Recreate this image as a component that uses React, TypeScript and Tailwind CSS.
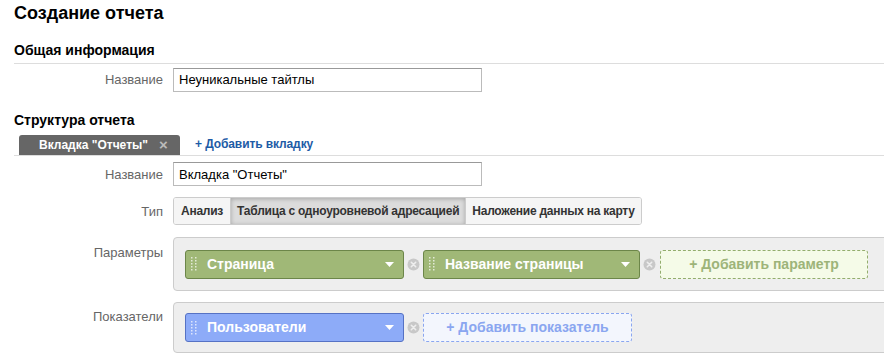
import React from "react";

function Grip() {
  return (
    <svg width="6" height="14" viewBox="0 0 6 14" className="shrink-0">
      {[1, 4, 7, 10, 13].map((y) =>
        [1, 5].map((x) => <rect key={`${x}-${y}`} x={x - 1} y={y - 1} width="1.5" height="1.5" fill="rgba(255,255,255,0.7)" />)
      )}
    </svg>
  );
}

function RemoveDot() {
  return (
    <svg width="13" height="13" viewBox="0 0 13 13" className="mx-[3px] shrink-0">
      <circle cx="6.5" cy="6.5" r="6" fill="#c8c8c8" />
      <path d="M4.3 4.3l4.4 4.4M8.7 4.3l-4.4 4.4" stroke="#eee" strokeWidth="1.6" strokeLinecap="round" />
    </svg>
  );
}

function Pill({ label, tone, width }: { label: string; tone: "green" | "blue"; width: string }) {
  const cls =
    tone === "green"
      ? "bg-[#a0b877] border-[#6c8649]"
      : "bg-[#8dabf8] border-[#5672c4]";
  return (
    <div className={`flex h-[29px] items-center rounded-[3px] border pl-[5px] pr-[9px] text-white ${cls} ${width}`}>
      <Grip />
      <span className="ml-[10px] flex-1 text-[14px] font-bold">{label}</span>
      <svg width="9" height="5" viewBox="0 0 9 5">
        <path d="M0 0h9L4.5 5z" fill="#fff" />
      </svg>
    </div>
  );
}

function Row({ label, children, labelTop }: { label: string; children: React.ReactNode; labelTop?: string }) {
  return (
    <div className="flex">
      <div className={`w-[164px] shrink-0 pr-[1px] text-right text-[13px] text-[#666] ${labelTop ?? ""}`}>{label}</div>
      <div className="ml-[9px] min-w-0 flex-1">{children}</div>
    </div>
  );
}

export default function App() {
  const input = "h-[24px] w-[309px] border border-[#bbb] border-t-[#999] bg-white px-[5px] text-[13px] text-black outline-none";
  return (
    <div className="h-[361px] w-[884px] overflow-hidden bg-white font-['Liberation_Sans',Arial,sans-serif] text-[#222]">
      <h1 className="pl-[14px] pt-[1px] text-[18px] font-bold leading-[24px] text-black">Создание отчета</h1>

      <h2 className="mt-[16px] pl-[14px] text-[14px] font-bold leading-[18px] text-black">Общая информация</h2>
      <div className="ml-[14px] mt-[4px] h-px bg-[#ddd]" />
      <div className="mt-[3px]">
        <Row label="Название" labelTop="pt-[3px]">
          <input className={input} defaultValue="Неуникальные тайтлы" />
        </Row>
      </div>

      <h2 className="mt-[19px] pl-[14px] text-[14px] font-bold leading-[18px] text-black">Структура отчета</h2>
      <div className="ml-[14px] mt-[6px] flex items-end border-b border-[#ddd]">
        <div className="ml-[5px] flex h-[20px] w-[161px] items-center rounded-t-[3px] bg-[#666] pl-[20px] text-[12px] font-bold text-white">
          Вкладка "Отчеты"
          <span className="ml-[11px] text-[15px] font-bold leading-none text-[#bbb]">×</span>
        </div>
        <span className="mb-[2px] ml-[15px] text-[12px] font-bold tracking-[-0.1px] text-[#1d5ba6]">+ Добавить вкладку</span>
      </div>

      <div className="mt-[6px]">
        <Row label="Название" labelTop="pt-[3px]">
          <input className={`${input} h-[23px]`} defaultValue='Вкладка "Отчеты"' />
        </Row>
      </div>

      <div className="mt-[11px]">
        <Row label="Тип" labelTop="pt-[5px]">
          <div className="flex h-[28px] w-fit overflow-hidden rounded-[3px] border border-[#ccc] text-[12px] font-bold tracking-[-0.25px] text-[#333]">
            <div className="flex items-center bg-[#f5f5f5] px-[7px]">Анализ</div>
            <div className="flex items-center border-x border-[#ccc] bg-[#dcdcdc] px-[6px] shadow-[inset_0_1px_4px_rgba(0,0,0,0.25)]">
              Таблица с одноуровневой адресацией
            </div>
            <div className="flex items-center bg-[#f5f5f5] px-[6px]">Наложение данных на карту</div>
          </div>
        </Row>
      </div>

      <div className="mt-[12px]">
        <Row label="Параметры" labelTop="pt-[6px]">
          <div className="-mr-[6px] flex h-[54px] items-center rounded-[4px] border border-[#ccc] bg-[#eee] pl-[11px]">
            <Pill label="Страница" tone="green" width="w-[219px]" />
            <RemoveDot />
            <Pill label="Название страницы" tone="green" width="w-[217px]" />
            <RemoveDot />
            <div className="ml-[1px] flex h-[29px] w-[208px] items-center justify-center rounded-[3px] border border-dashed border-[#93ad6d] bg-[#f5fbe8] text-[14px] font-bold text-[#9db479]">
              + Добавить параметр
            </div>
          </div>
        </Row>
      </div>

      <div className="mt-[11px]">
        <Row label="Показатели" labelTop="pt-[5px]">
          <div className="-mr-[6px] flex h-[51px] items-center rounded-[4px] border border-[#ccc] bg-[#eee] pl-[11px]">
            <Pill label="Пользователи" tone="blue" width="w-[219px]" />
            <RemoveDot />
            <div className="flex h-[29px] w-[209px] items-center justify-center rounded-[3px] border border-dashed border-[#8aa6f0] bg-[#f3f6fd] text-[14px] font-bold text-[#8aa6f0]">
              + Добавить показатель
            </div>
          </div>
        </Row>
      </div>
    </div>
  );
}
